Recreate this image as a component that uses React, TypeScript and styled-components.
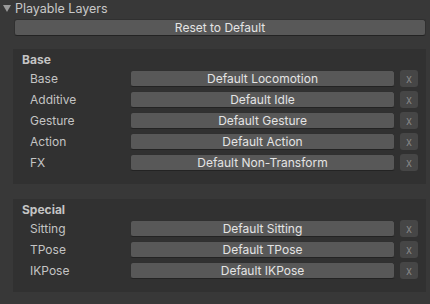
import React from 'react';
import styled, { createGlobalStyle } from 'styled-components';

const GlobalStyle = createGlobalStyle`
	html, body {
		margin: 0;
		padding: 0;
		background: #383838;
	}
	body {
		font-family: Inter, "Noto Sans", "Liberation Sans", sans-serif;
		font-size: 12px;
		color: #c4c4c4;
	}
`;

type Layer = { label: string; value: string };

const baseLayers: Layer[] = [
	{ label: 'Base', value: 'Default Locomotion' },
	{ label: 'Additive', value: 'Default Idle' },
	{ label: 'Gesture', value: 'Default Gesture' },
	{ label: 'Action', value: 'Default Action' },
	{ label: 'FX', value: 'Default Non-Transform' },
];

const specialLayers: Layer[] = [
	{ label: 'Sitting', value: 'Default Sitting' },
	{ label: 'TPose', value: 'Default TPose' },
	{ label: 'IKPose', value: 'Default IKPose' },
];

const LayerGroup = ({ title, layers }: { title: string; layers: Layer[] }) => (
	<Panel>
		<Heading>{title}</Heading>
		<Rows>
			{layers.map(layer => (
				<Row key={layer.label}>
					<Label>{layer.label}</Label>
					<FieldButton>{layer.value}</FieldButton>
					<ClearButton>x</ClearButton>
				</Row>
			))}
		</Rows>
	</Panel>
);

export default function App() {
	return <>
		<GlobalStyle />
		<Inspector>
			<Foldout>
				<Arrow viewBox="0 0 8 7"><path d="M0 0 L8 0 L4 7 Z" /></Arrow>
				<span>Playable Layers</span>
			</Foldout>
			<ResetButton>Reset to Default</ResetButton>
			<LayerGroup title="Base" layers={baseLayers} />
			<LayerGroup title="Special" layers={specialLayers} />
		</Inspector>
	</>;
}

// ================== styled elements =====================

const Inspector = styled('div')`
	width: 430px;
	height: 304px;
	display: flex;
	flex-direction: column;
	box-sizing: border-box;
	overflow: hidden;
`;

const Foldout = styled('div')`
	display: flex;
	align-items: center;
	height: 16px;
	padding-left: 3px;
	gap: 4px;
	font-size: 12.5px;
	color: #c8c8c8;
`;

const Arrow = styled('svg')`
	width: 8px;
	height: 7px;
	fill: #9a9a9a;
`;

const ResetButton = styled('div')`
	height: 17px;
	margin: 3px 4px 0 14px;
	box-sizing: border-box;
	display: flex;
	align-items: center;
	justify-content: center;
	background: #585858;
	border: 1px solid #303030;
	border-bottom-color: #232323;
	border-radius: 3px;
	color: #e4e4e4;
`;

const Panel = styled('div')`
	margin: 13px 4px 2px 13px;
	padding: 1px 8px 13px 0;
	background: #313131;
	& + & {
		margin-top: 13px;
	}
`;

const Heading = styled('div')`
	height: 20px;
	line-height: 20px;
	padding-left: 9px;
	font-weight: 700;
	color: #c4c4c4;
`;

const Rows = styled('div')`
	display: flex;
	flex-direction: column;
	gap: 4px;
`;

const Row = styled('div')`
	display: flex;
	align-items: center;
	height: 17px;
	gap: 5px;
`;

const Label = styled('div')`
	width: 112px;
	box-sizing: border-box;
	padding-left: 17px;
	color: #c4c4c4;
`;

const FieldButton = styled('div')`
	flex: 1;
	height: 17px;
	box-sizing: border-box;
	display: flex;
	align-items: center;
	justify-content: center;
	background: #585858;
	border: 1px solid #303030;
	border-bottom-color: #232323;
	border-radius: 3px;
	color: #e4e4e4;
	white-space: nowrap;
`;

const ClearButton = styled('div')`
	width: 18px;
	height: 17px;
	box-sizing: border-box;
	display: flex;
	align-items: center;
	justify-content: center;
	background: #464646;
	border-radius: 3px;
	color: #858585;
	font-size: 11px;
`;
